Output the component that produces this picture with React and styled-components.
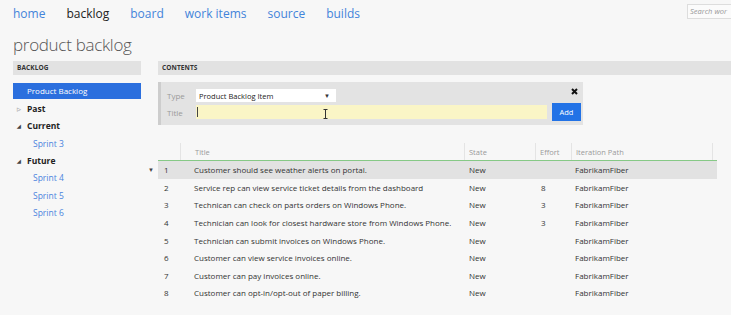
import React from 'react';
import styled, { createGlobalStyle } from 'styled-components';

const GlobalStyle = createGlobalStyle`
  html, body {
    margin: 0;
    background: #f7f7f7;
    font-family: 'Open Sans', 'Liberation Sans', sans-serif;
    color: #333;
    overflow: hidden;
  }
`;

const Page = styled.div`
  width: 731px;
  height: 315px;
  padding-left: 13px;
  box-sizing: border-box;
`;

const Nav = styled.nav`
  display: flex;
  align-items: center;
  gap: 21px;
  height: 28px;
`;

const NavLink = styled.a`
  font-size: 12px;
  color: ${(p) => (p.$active ? '#222' : '#4384da')};
  text-decoration: none;
  line-height: 1;
`;

const Search = styled.div`
  margin-left: auto;
  align-self: flex-start;
  margin-top: 4px;
  width: 41px;
  height: 13px;
  border: 1px solid #ddd;
  border-right: none;
  background: #fbfbfb;
  font-size: 7.5px;
  font-style: italic;
  color: #999;
  line-height: 13px;
  padding-left: 2px;
  white-space: nowrap;
`;

const Heading = styled.h1`
  margin: 0;
  height: 33px;
  font-size: 17px;
  font-weight: 300;
  letter-spacing: -0.3px;
  color: #555;
  line-height: 20px;
  padding-top: 7px;
  box-sizing: border-box;
`;

const Main = styled.div`
  display: flex;
  gap: 17px;
`;

const Sidebar = styled.div`
  width: 128px;
`;

const Content = styled.div`
  flex: 1;
`;

const SectionHeader = styled.div`
  height: 14px;
  background: #e2e2e2;
  font-size: 6.5px;
  font-weight: 700;
  color: #333;
  line-height: 14px;
  padding-left: 4px;
  letter-spacing: 0.1px;
`;

const Tree = styled.div`
  margin-top: 8px;
`;

const SelectedItem = styled.div`
  height: 16px;
  background: #2b6fde;
  color: #fff;
  font-size: 8px;
  line-height: 16px;
  padding-left: 14px;
  margin-bottom: 1px;
`;

const TreeRow = styled.div`
  height: 17.3px;
  display: flex;
  align-items: center;
  padding-left: ${(p) => (p.$child ? '20px' : '4px')};
  font-size: 8.5px;
  font-weight: ${(p) => (p.$child ? 400 : 700)};
  color: ${(p) => (p.$child ? '#4a84de' : '#222')};
`;

const Toggle = styled.span`
  width: 10px;
  font-size: 5px;
  color: ${(p) => (p.$open ? '#444' : '#aaa')};
`;

const FormPanel = styled.div`
  position: relative;
  margin-top: 7px;
  width: 425px;
  height: 43px;
  background: #e3e3e3;
  border-left: 3px solid #cdcdcd;
  padding: 7px 0 0 6px;
  box-sizing: border-box;
`;

const FormRow = styled.div`
  display: flex;
  align-items: center;
  height: ${(p) => p.$h}px;
  margin-top: ${(p) => p.$mt || 0}px;
`;

const Label = styled.span`
  width: 29px;
  font-size: 8px;
  color: #9a9a9a;
`;

const Select = styled.div`
  width: 140px;
  height: 13px;
  background: #fff;
  display: flex;
  align-items: center;
  justify-content: space-between;
  padding: 0 6px 0 3px;
  box-sizing: border-box;
  font-size: 7.5px;
  color: #222;
`;

const Caret = styled.span`
  font-size: 6px;
  color: #333;
`;

const TitleInput = styled.div`
  position: relative;
  width: 351px;
  height: 14px;
  background: #faf5c6;
  box-sizing: border-box;
  padding: 2px 0 0 1px;
`;

const TextCursor = styled.div`
  width: 1px;
  height: 10px;
  background: #444;
`;

const IBeam = styled.svg`
  position: absolute;
  left: 127px;
  top: 4px;
`;

const AddButton = styled.button`
  margin-left: 5px;
  width: 29px;
  height: 18px;
  border: none;
  background: #2272e6;
  color: #fff;
  font-family: inherit;
  font-size: 7.5px;
  padding: 0;
`;

const Close = styled.svg`
  position: absolute;
  right: 5px;
  top: 6px;
`;

const Table = styled.div`
  margin-top: 18px;
  margin-left: -14px;
  width: 573px;
`;

const Line = styled.div`
  display: flex;
`;

const Marker = styled.div`
  width: 14px;
  display: flex;
  align-items: center;
  justify-content: center;
  font-size: 6px;
  color: #444;
`;

const Cells = styled.div`
  flex: 1;
  display: grid;
  grid-template-columns: 22px 284px 71px 36px 141px 1fr;
  background: ${(p) => (p.$selected ? '#e2e2e2' : 'transparent')};
  border-bottom: ${(p) => (p.$header ? '1.5px solid #86c986' : 'none')};
`;

const HeadCell = styled.div`
  height: 17px;
  display: flex;
  align-items: center;
  padding-left: ${(p) => p.$pl || 4}px;
  font-size: 7.5px;
  color: #9a9a9a;
  border-left: ${(p) => (p.$div ? '1px solid #e4e4e4' : 'none')};
  box-sizing: border-box;
`;

const Cell = styled.div`
  height: 17.6px;
  display: flex;
  align-items: center;
  padding-left: ${(p) => p.$pl || 5}px;
  font-size: 8px;
  color: #333;
  white-space: nowrap;
`;

const rows = [
  ['Customer should see weather alerts on portal.', ''],
  ['Service rep can view service ticket details from the dashboard', '8'],
  ['Technican can check on parts orders on Windows Phone.', '3'],
  ['Technician can look for closest hardware store from Windows Phone.', '3'],
  ['Technician can submit invoices on Windows Phone.', ''],
  ['Customer can view service invoices online.', ''],
  ['Customer can pay invoices online.', ''],
  ['Customer can opt-in/opt-out of paper billing.', ''],
];

export default function App() {
  return (
    <Page>
      <GlobalStyle />
      <Nav>
        <NavLink>home</NavLink>
        <NavLink $active>backlog</NavLink>
        <NavLink>board</NavLink>
        <NavLink>work items</NavLink>
        <NavLink>source</NavLink>
        <NavLink>builds</NavLink>
        <Search>Search wor</Search>
      </Nav>
      <Heading>product backlog</Heading>
      <Main>
        <Sidebar>
          <SectionHeader>BACKLOG</SectionHeader>
          <Tree>
            <SelectedItem>Product Backlog</SelectedItem>
            <TreeRow>
              <Toggle>▷</Toggle>Past
            </TreeRow>
            <TreeRow>
              <Toggle $open>◢</Toggle>Current
            </TreeRow>
            <TreeRow $child>Sprint 3</TreeRow>
            <TreeRow>
              <Toggle $open>◢</Toggle>Future
            </TreeRow>
            <TreeRow $child>Sprint 4</TreeRow>
            <TreeRow $child>Sprint 5</TreeRow>
            <TreeRow $child>Sprint 6</TreeRow>
          </Tree>
        </Sidebar>
        <Content>
          <SectionHeader>CONTENTS</SectionHeader>
          <FormPanel>
            <FormRow $h={13}>
              <Label>Type</Label>
              <Select>
                Product Backlog Item
                <Caret>▼</Caret>
              </Select>
            </FormRow>
            <FormRow $h={18} $mt={1}>
              <Label>Title</Label>
              <TitleInput>
                <TextCursor />
                <IBeam width="5" height="10" viewBox="0 0 5 10">
                  <path d="M0.5 0.5h4M2.5 0.5v9M0.5 9.5h4" stroke="#333" strokeWidth="1" fill="none" />
                </IBeam>
              </TitleInput>
              <AddButton>Add</AddButton>
            </FormRow>
            <Close width="7" height="7" viewBox="0 0 7 7">
              <path d="M1 1L6 6M6 1L1 6" stroke="#111" strokeWidth="2" />
            </Close>
          </FormPanel>
          <Table>
            <Line>
              <Marker />
              <Cells $header>
                <HeadCell />
                <HeadCell $div $pl={14}>Title</HeadCell>
                <HeadCell $div>State</HeadCell>
                <HeadCell $div>Effort</HeadCell>
                <HeadCell $div>Iteration Path</HeadCell>
                <HeadCell $div />
              </Cells>
            </Line>
            {rows.map(([title, effort], i) => (
              <Line key={i}>
                <Marker>{i === 0 ? '▼' : ''}</Marker>
                <Cells $selected={i === 0}>
                  <Cell $pl={6}>{i + 1}</Cell>
                  <Cell $pl={14}>{title}</Cell>
                  <Cell>New</Cell>
                  <Cell $pl={6}>{effort}</Cell>
                  <Cell $pl={4}>FabrikamFiber</Cell>
                  <Cell />
                </Cells>
              </Line>
            ))}
          </Table>
        </Content>
      </Main>
    </Page>
  );
}
